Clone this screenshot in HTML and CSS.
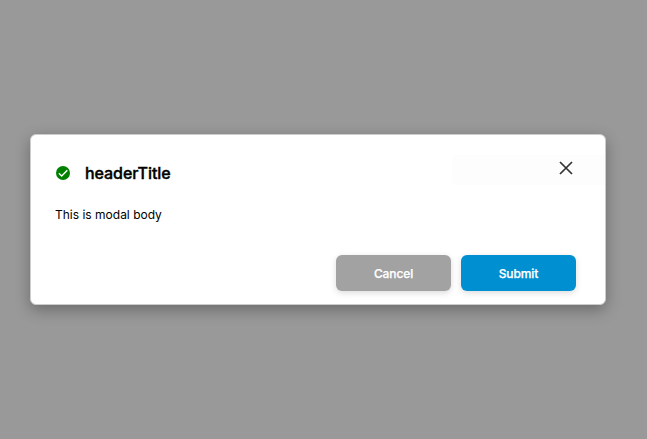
FILE: index.html
```html
<!DOCTYPE html>
<html lang="en">
<head>
<meta charset="utf-8">
<title>Modal</title>
<link rel="stylesheet" href="styles.css">
</head>
<body>
<div class="modal" role="dialog">
  <header class="header">
    <svg class="status" viewBox="0 0 14 14"><circle cx="7" cy="7" r="7" fill="#008000"/><path d="M2.9 7.2 5.7 10l5.6-5.7" fill="none" stroke="#fff" stroke-width="1.4"/></svg>
    <h1 class="title">headerTitle</h1>
    <button class="close" aria-label="Close"><svg viewBox="0 0 14 14"><path d="M1 1l12 12M13 1 1 13" fill="none" stroke="#333" stroke-width="1.7"/></svg></button>
  </header>
  <p class="text">This is modal body</p>
  <footer class="footer">
    <button class="btn cancel">Cancel</button>
    <button class="btn submit">Submit</button>
  </footer>
</div>
</body>
</html>
```
FILE: styles.css
```css
* { box-sizing: border-box; }
body {
  margin: 0;
  height: 439px;
  padding: 134px 41px 0 30px;
  background: #999;
  font-family: Inter, sans-serif;
  overflow: hidden;
}
.modal {
  position: relative;
  height: 171px;
  padding: 24px 29px 13px 24px;
  border: 1px solid #ccc;
  border-radius: 6px;
  background: #fff;
  box-shadow: 0 5px 15px rgba(0, 0, 0, .3);
  display: flex;
  flex-direction: column;
}
/* faint tint behind the close button */
.modal::before {
  content: "";
  position: absolute;
  top: 20px;
  right: 0;
  width: 153px;
  height: 30px;
  border-radius: 5px 0 0 5px;
  background: #fdfdfd;
}
.header { position: relative; display: flex; height: 28px; align-items: center; }
.status { width: 14px; height: 14px; margin-left: 1px; }
.title {
  margin: 0 0 0 15px;
  font-size: 16px;
  line-height: 28px;
  font-weight: 500;
  letter-spacing: -.05px;
  -webkit-text-stroke: .4px #000;
}
.close { margin: -10px 3px 0 auto; padding: 0; border: 0; background: none; width: 14px; height: 14px; }
.close svg { display: block; width: 14px; height: 14px; }
.text { margin: 18px 0 0; font-size: 12px; line-height: 20px; }
.footer { display: flex; justify-content: flex-end; gap: 10px; margin-top: auto; }
.btn {
  width: 115px;
  height: 36px;
  border: 0;
  border-radius: 6px;
  color: #fff;
  font: 500 12px Inter, sans-serif;
  letter-spacing: -.1px;
  -webkit-text-stroke: .25px #fff;
  box-shadow: 0 2px 6px rgba(0, 0, 0, .14);
}
.cancel { background: #a2a2a2; }
.submit { background: #008fd0; }
```
